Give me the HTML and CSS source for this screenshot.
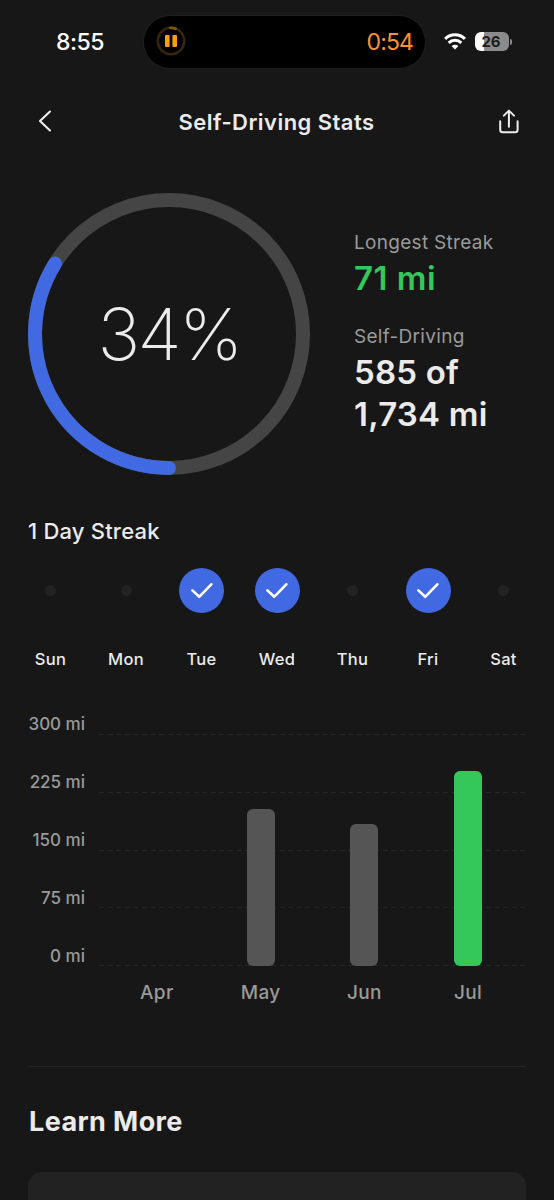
FILE: index.html
```html
<!DOCTYPE html>
<html lang="en">
<head>
    <meta charset="UTF-8">
    <meta name="viewport" content="width=device-width, initial-scale=1.0">
    <title>Self-Driving Stats</title>
    <link rel="stylesheet" href="styles.css">
</head>
<body>
    <div class="status-bar">
        <span class="clock">8:55</span>
        <div class="island">
            <svg class="island-icon" width="30" height="30" viewBox="0 0 30 30" fill="none">
                <circle cx="15" cy="15" r="13.2" stroke="#38260c" stroke-width="2.6"/>
                <path d="M14.2 1.8A13.2 13.2 0 0 1 19.6 2.7" stroke="#805512" stroke-width="2.8" stroke-linecap="round"/>
                <rect x="9" y="9" width="4.6" height="12" rx="1" fill="#ff9f0a"/>
                <rect x="16.4" y="9" width="4.6" height="12" rx="1" fill="#ff9f0a"/>
            </svg>
            <span class="timer">0:54</span>
        </div>
        <svg class="wifi" width="22" height="17" viewBox="0 0 22 17" fill="none" stroke="#fff" stroke-width="3">
            <path d="M1.1 5.9C6.7.5 15.3.5 20.9 5.9"/>
            <path d="M4.7 9.8C8.2 6.4 13.8 6.4 17.3 9.8"/>
            <path d="M11 16.6L7.6 13.1Q11 10.3 14.4 13.1Z" fill="#fff" stroke="none"/>
        </svg>
        <div class="battery">
            <span class="battery-level">26</span>
            <span class="battery-tip"></span>
        </div>
    </div>

    <header>
        <svg class="back" width="14" height="22" viewBox="0 0 14 22" fill="none" stroke="#eee" stroke-width="2.1" stroke-linecap="round" stroke-linejoin="round">
            <path d="M12 1.5L2 11L12 20.5"/>
        </svg>
        <h1>Self-Driving Stats</h1>
        <svg width="20" height="25" viewBox="0 0 20 25" fill="none" stroke="#eee" stroke-width="2" stroke-linecap="round" stroke-linejoin="round">
            <path d="M1.2 12.3V20.8Q1.2 23.3 3.7 23.3H16.1Q18.6 23.3 18.6 20.8V12.3"/>
            <path d="M9.9 17.8V1.8M4.8 6.6L9.9 1.6L15 6.6"/>
        </svg>
    </header>

    <main>
        <section class="summary">
            <div class="ring">
                <svg width="282" height="282" viewBox="0 0 282 282" fill="none" stroke-width="14">
                    <circle cx="141" cy="141" r="134" stroke="#454545"/>
                    <path d="M141 275A134 134 0 0 1 27 70.6" stroke="#4169e1" stroke-linecap="round"/>
                </svg>
                <span class="percent">34%</span>
            </div>
            <div class="totals">
                <p class="label">Longest Streak</p>
                <p class="value green">71 mi</p>
                <p class="label">Self-Driving</p>
                <p class="value">585 of<br>1,734 mi</p>
            </div>
        </section>

        <section class="streak">
            <h2>1 Day Streak</h2>
            <ul class="days">
                <li><span class="dot"></span>Sun</li>
                <li><span class="dot"></span>Mon</li>
                <li><span class="dot done"><svg width="22" height="16" viewBox="0 0 22 16"><path d="M1.4 7.4L8.2 13.8L20.3 1.3"/></svg></span>Tue</li>
                <li><span class="dot done"><svg width="22" height="16" viewBox="0 0 22 16"><path d="M1.4 7.4L8.2 13.8L20.3 1.3"/></svg></span>Wed</li>
                <li><span class="dot"></span>Thu</li>
                <li><span class="dot done"><svg width="22" height="16" viewBox="0 0 22 16"><path d="M1.4 7.4L8.2 13.8L20.3 1.3"/></svg></span>Fri</li>
                <li><span class="dot"></span>Sat</li>
            </ul>
        </section>

        <section class="chart">
            <div class="scale">
                <span>300 mi</span>
                <span>225 mi</span>
                <span>150 mi</span>
                <span>75 mi</span>
                <span>0 mi</span>
            </div>
            <div class="plot">
                <div class="lines"><i></i><i></i><i></i><i></i><i></i></div>
                <div class="bars">
                    <div></div>
                    <div class="bar" style="height: 157px"></div>
                    <div class="bar" style="height: 142px"></div>
                    <div class="bar current" style="height: 195px"></div>
                </div>
            </div>
            <div class="months">
                <span>Apr</span>
                <span>May</span>
                <span>Jun</span>
                <span>Jul</span>
            </div>
        </section>

        <section class="more">
            <h2>Learn More</h2>
            <div class="card"></div>
        </section>
    </main>
</body>
</html>
```
FILE: styles.css
```css
* {
    margin: 0;
    padding: 0;
    box-sizing: border-box;
}

body {
    width: 554px;
    height: 1200px;
    overflow: hidden;
    background-color: #171717;
    color: #ebebeb;
    font-family: Inter, "Liberation Sans", sans-serif;
}

svg {
    display: block;
    flex-shrink: 0;
}

/* Status bar */

.status-bar {
    display: flex;
    align-items: center;
    height: 83px;
    padding-left: 56px;
    color: #fff;
}

.clock {
    width: 87px;
    font-size: 23px;
    font-weight: 550;
    letter-spacing: -0.5px;
}

.island {
    display: flex;
    align-items: center;
    justify-content: space-between;
    width: 283px;
    height: 54px;
    padding: 0 12px;
    border: 1px solid #202022;
    border-radius: 27px;
    background-color: #000;
}

.island-icon {
    margin-bottom: 1px;
}

.timer {
    font-size: 23px;
    letter-spacing: -0.9px;
    color: #ff9230;
}

.wifi {
    margin-left: 18px;
}

.battery {
    display: flex;
    align-items: center;
    gap: 1px;
    margin-left: 9px;
}

.battery-level {
    width: 34px;
    height: 19px;
    padding-right: 2px;
    border-radius: 6px;
    background: linear-gradient(to right, #fff 9px, #8b8b8b 9px);
    color: #1c1c1c;
    font-size: 15px;
    font-weight: 650;
    line-height: 19px;
    text-align: center;
}

.battery-tip {
    width: 2px;
    height: 6px;
    border-radius: 0 2px 2px 0;
    background-color: #8b8b8b;
}

/* Header */

header {
    display: flex;
    align-items: center;
    justify-content: space-between;
    height: 77px;
    padding: 0 35px 0 38px;
}

h1 {
    padding-left: 2px;
    font-size: 22px;
    font-weight: 600;
    letter-spacing: 0.45px;
}

.back {
    margin-bottom: 1px;
}

main {
    padding: 33px 28px 0;
}

/* Ring and totals */

.summary {
    display: flex;
    gap: 44px;
}

.ring {
    display: grid;
    place-items: center;
    width: 282px;
    height: 282px;
}

.ring svg,
.percent {
    grid-area: 1 / 1;
}

.percent {
    font-size: 72px;
    font-weight: 250;
    letter-spacing: -2.7px;
    line-height: 72px;
}

.totals {
    padding-top: 36px;
}

.label {
    color: #9a9a9a;
    font-size: 19px;
    letter-spacing: 0.3px;
    line-height: 28px;
}

.value {
    font-size: 33px;
    font-weight: 570;
    letter-spacing: 0.2px;
    line-height: 42px;
    white-space: nowrap;
}

.green {
    margin-bottom: 24px;
    letter-spacing: 0.5px;
    color: #34c759;
}

/* Streak */

.streak {
    padding-top: 41px;
}

.streak h2 {
    font-size: 22px;
    font-weight: 500;
    letter-spacing: 0.2px;
    line-height: 30px;
}

.days {
    display: flex;
    justify-content: space-between;
    margin-top: 22px;
    list-style: none;
}

.days li {
    display: flex;
    flex-direction: column;
    align-items: center;
    width: 45px;
    height: 101px;
    font-size: 16.5px;
    font-weight: 500;
    letter-spacing: 0.35px;
    line-height: 20px;
}

.dot {
    width: 11px;
    height: 11px;
    margin: 17px 0 53px;
    border-radius: 50%;
    background-color: #222;
}

.dot.done {
    display: grid;
    place-items: center;
    width: 45px;
    height: 45px;
    margin: 0 0 36px;
    background-color: #4169e1;
}

.dot path {
    fill: none;
    stroke: #fff;
    stroke-width: 2.6;
    stroke-linecap: round;
    stroke-linejoin: round;
}

/* Chart */

.chart {
    display: grid;
    grid-template-columns: 57px 427px;
    column-gap: 14px;
    margin-top: 45px;
    color: #9a9a9a;
}

.scale {
    display: flex;
    flex-direction: column;
    justify-content: space-between;
    height: 252px;
    font-size: 17px;
    font-weight: 500;
    line-height: 20px;
    text-align: right;
    white-space: nowrap;
}

.plot {
    display: grid;
    padding-top: 20px;
}

.lines,
.bars {
    grid-area: 1 / 1;
}

.lines {
    display: flex;
    flex-direction: column;
    justify-content: space-between;
}

.lines i {
    height: 1px;
    background: repeating-linear-gradient(to right, #262626 0 5px, transparent 5px 8.6px);
}

.bars,
.months {
    display: grid;
    grid-template-columns: repeat(4, 1fr);
    justify-items: center;
    padding: 0 6px;
}

.bars {
    align-items: end;
}

.bar {
    width: 28px;
    border-radius: 6px;
    background-color: #555;
}

.bar.current {
    background-color: #34c759;
}

.months {
    grid-column: 2;
    padding-top: 14px;
    font-size: 19px;
    font-weight: 500;
    letter-spacing: 0.4px;
    line-height: 25px;
}

/* Learn more */

.more {
    margin-top: 61px;
    border-top: 1px solid #242424;
}

.more h2 {
    padding: 37px 0 33px 1px;
    font-size: 27px;
    font-weight: 700;
    letter-spacing: 0.4px;
    line-height: 35px;
}

.card {
    height: 60px;
    border-radius: 14px;
    background-color: #222;
}
```
